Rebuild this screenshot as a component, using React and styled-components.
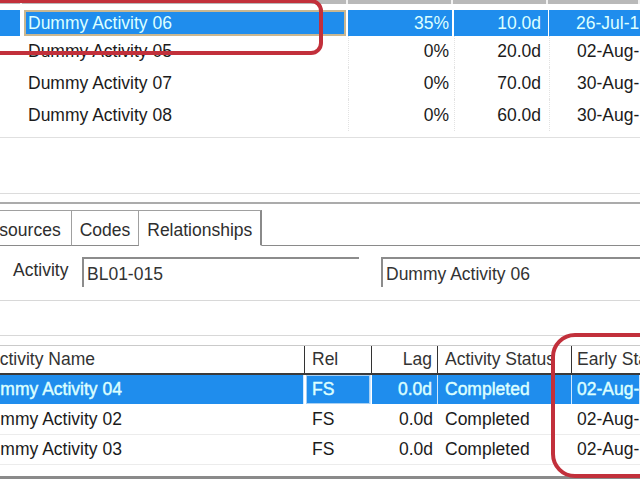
import styled, { createGlobalStyle } from "styled-components";

const SEL = "#1f8ded";
const SEL_TEXT = "#dcffff";
const TOP_COLS = "22px 326px 105px 95px 92px";
const LOW_COLS = "305px 67px 66px 134px 68px";

const GlobalStyle = createGlobalStyle`
  html, body { margin: 0; padding: 0; background: #fff; }
  body {
    font-family: "Liberation Sans", Arial, sans-serif;
    font-size: 17.5px;
    color: #1b1b1b;
    overflow: hidden;
  }
`;

const Page = styled.div`
  position: relative;
  width: 640px;
  height: 480px;
  overflow: hidden;
  background: #fff;
`;

const TopStrip = styled.div`
  display: grid;
  grid-template-columns: ${TOP_COLS};
  height: 4px;
  div {
    background: #b9b9b9;
    border-right: 2px solid #f2f2f2;
  }
`;

const TopTable = styled.div`
  margin-top: 6px;
  height: 127px;
  border-bottom: 1px solid #e0e0e0;
`;

const TopRow = styled.div`
  display: grid;
  grid-template-columns: ${TOP_COLS};
  height: ${p => p.$h}px;
`;

const Cell = styled.div`
  line-height: ${p => p.$lh}px;
  height: ${p => p.$lh}px;
  white-space: nowrap;
  overflow: hidden;
  box-sizing: border-box;
  text-align: ${p => p.$align || "left"};
  padding: 0 ${p => p.$padR || 0}px 0 ${p => p.$padL || 0}px;
  margin: 0 ${p => p.$mr || 0}px 0 ${p => p.$ml || 0}px;
  text-indent: ${p => p.$indent || 0}px;
  background: ${p => (p.$sel ? SEL : "transparent")};
  color: ${p => (p.$sel ? SEL_TEXT : "#1b1b1b")};
  border-left: ${p => (p.$grid && !p.$sel ? "1px dotted #e2e2e2" : "0")};
`;

const NameCell = styled(Cell)`
  border: 2px solid ${p => (p.$focus ? "#c9b791" : "transparent")};
  line-height: ${p => p.$lh - 4}px;
`;

const Rule = styled.div`
  margin-top: ${p => p.$top}px;
  height: ${p => p.$size || 1}px;
  background: ${p => p.$color};
`;

const TabStrip = styled.div`
  display: flex;
  align-items: stretch;
  margin-top: 6px;
  height: 36px;
  margin-left: -34px;
`;

const Tab = styled.div`
  flex-shrink: 0;
  box-sizing: border-box;
  padding: 6px ${p => p.$padR}px 0 ${p => p.$padL}px;
  line-height: 26px;
  color: #2e2e2e;
  border-top: 1px solid #a0a0a0;
  border-right: ${p => (p.$active ? "2px solid #8a8a8a" : "1px solid #a0a0a0")};
  border-bottom: ${p => (p.$active ? "1px solid transparent" : "1px solid #8a8a8a")};
  white-space: nowrap;
`;

const TabFill = styled.div`
  flex: 1;
  border-bottom: 1px solid #8a8a8a;
`;

const FieldRow = styled.div`
  display: flex;
  align-items: flex-start;
  height: 54px;
  box-sizing: border-box;
  padding: 11px 0 0 13px;
`;

const Label = styled.div`
  flex-shrink: 0;
  width: 69px;
  line-height: 26px;
  color: #2e2e2e;
`;

const Field = styled.div`
  flex-shrink: 0;
  box-sizing: border-box;
  width: ${p => p.$w}px;
  margin-left: ${p => p.$ml || 0}px;
  height: 30px;
  padding: 2px 0 0 3px;
  line-height: 26px;
  color: #333;
  border-top: 2px solid #8c8c8c;
  border-left: 2px solid #8c8c8c;
  white-space: nowrap;
  overflow: hidden;
`;

const LowTable = styled.div`
  margin-top: 9px;
`;

const HeadRow = styled.div`
  display: grid;
  grid-template-columns: ${LOW_COLS};
  height: 30px;
  box-sizing: border-box;
  border-top: 1px solid #cacaca;
  border-bottom: 2px solid #3a3a3a;
`;

const HeadCell = styled.div`
  line-height: 27px;
  color: #333;
  white-space: nowrap;
  overflow: hidden;
  text-align: ${p => p.$align || "left"};
  padding: 0 ${p => p.$padR || 0}px 0 ${p => p.$padL || 0}px;
  text-indent: ${p => p.$indent || 0}px;
  border-right: ${p => (p.$last ? "0" : "1px solid #333")};
`;

const LowRow = styled.div`
  display: grid;
  grid-template-columns: ${LOW_COLS};
  height: 30px;
  box-sizing: border-box;
  border-bottom: 1px solid ${p => (p.$sel ? "transparent" : "#ececec")};
  ${p => p.$sel && `-webkit-text-stroke: 0.45px ${SEL_TEXT};`}
`;

const LowCell = styled(Cell)`
  border-left: 0;
  border-right: ${p => (p.$sel ? "1px solid #cfe8ff" : "0")};
  box-shadow: ${p => (p.$focus ? "inset 0 0 0 1px #a8d0f3" : "none")};
`;

const BottomEdge = styled.div`
  margin-top: 11px;
  height: 3px;
  background: #8a8a8a;
`;

const Callout = styled.div`
  position: absolute;
  left: ${p => p.$x}px;
  top: ${p => p.$y}px;
  width: ${p => p.$w}px;
  height: ${p => p.$h}px;
  box-sizing: border-box;
  border: 4px solid #c2303b;
  border-radius: ${p => p.$r}px;
  pointer-events: none;
`;

const topRows = [
  { name: "Dummy Activity 06", pct: "35%", dur: "10.0d", start: "26-Jul-16", h: 26, sel: true },
  { name: "Dummy Activity 05", pct: "0%", dur: "20.0d", start: "02-Aug-16", h: 31 },
  { name: "Dummy Activity 07", pct: "0%", dur: "70.0d", start: "30-Aug-16", h: 32 },
  { name: "Dummy Activity 08", pct: "0%", dur: "60.0d", start: "30-Aug-16", h: 32 },
];

const relRows = [
  { name: "Dummy Activity 04", rel: "FS", lag: "0.0d", status: "Completed", start: "02-Aug-16", sel: true },
  { name: "Dummy Activity 02", rel: "FS", lag: "0.0d", status: "Completed", start: "02-Aug-16" },
  { name: "Dummy Activity 03", rel: "FS", lag: "0.0d", status: "Completed", start: "02-Aug-16" },
];

export default function App() {
  return (
    <Page>
      <GlobalStyle />
      <TopStrip>
        <div /><div /><div /><div /><div />
      </TopStrip>

      <TopTable>
        {topRows.map(r => (
          <TopRow key={r.name} $h={r.h}>
            <Cell $lh={r.h} $sel={r.sel} $mr={2} />
            <NameCell $lh={r.h} $sel={r.sel} $focus={r.sel} $ml={2} $mr={2} $padL={2}>
              {r.name}
            </NameCell>
            <Cell $lh={r.h} $sel={r.sel} $grid $mr={1} $align="right" $padR={3}>{r.pct}</Cell>
            <Cell $lh={r.h} $sel={r.sel} $grid $ml={1} $align="right" $padR={7}>{r.dur}</Cell>
            <Cell $lh={r.h} $sel={r.sel} $grid $ml={1} $padL={27}>{r.start}</Cell>
          </TopRow>
        ))}
      </TopTable>

      <Rule $top={55} $color="#dcdcdc" />
      <Rule $top={8} $size={2} $color="#ababab" />

      <TabStrip>
        <Tab $padL={11} $padR={10}>Resources</Tab>
        <Tab $padL={8} $padR={8}>Codes</Tab>
        <Tab $active $padL={8} $padR={8}>Relationships</Tab>
        <TabFill />
      </TabStrip>

      <FieldRow>
        <Label>Activity</Label>
        <Field $w={277}>BL01-015</Field>
        <Field $w={280} $ml={22}>Dummy Activity 06</Field>
      </FieldRow>

      <Rule $top={0} $color="#d8d8d8" />
      <Rule $top={34} $color="#d8d8d8" />

      <LowTable>
        <HeadRow>
          <HeadCell $indent={-12}>Activity Name</HeadCell>
          <HeadCell $padL={7}>Rel</HeadCell>
          <HeadCell $align="right" $padR={5}>Lag</HeadCell>
          <HeadCell $padL={7}>Activity Status</HeadCell>
          <HeadCell $last $padL={5}>Early Start</HeadCell>
        </HeadRow>
        {relRows.map(r => (
          <LowRow key={r.name} $sel={r.sel}>
            <LowCell $lh={29} $sel={r.sel} $mr={1} $indent={-22}>{r.name}</LowCell>
            <LowCell $lh={29} $sel={r.sel} $focus={r.sel} $ml={1} $mr={1} $padL={6}>{r.rel}</LowCell>
            <LowCell $lh={29} $sel={r.sel} $align="right" $padR={5}>{r.lag}</LowCell>
            <LowCell $lh={29} $sel={r.sel} $padL={7}>{r.status}</LowCell>
            <LowCell $lh={29} $sel={r.sel} $padL={5}>{r.start}</LowCell>
          </LowRow>
        ))}
      </LowTable>
      <BottomEdge />

      <Callout $x={-20} $y={-1} $w={343} $h={56} $r={12} />
      <Callout $x={551} $y={333} $w={130} $h={145} $r={24} />
    </Page>
  );
}
